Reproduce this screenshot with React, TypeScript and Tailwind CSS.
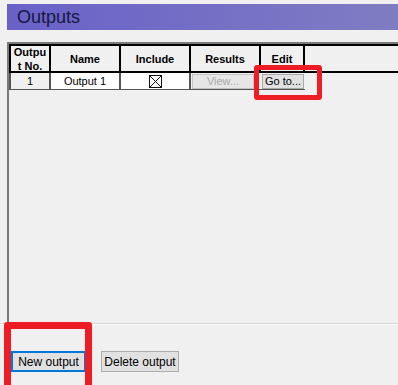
import React from 'react';

const font = { fontFamily: '"Liberation Sans", Arial, sans-serif' };

const HeaderCell = ({ w, first, children }: { w: string; first?: boolean; children: React.ReactNode }) => (
  <div
    className={`${w} ${first ? 'border-l-2' : ''} border-r-2 border-black flex items-center justify-center text-center text-[11px] font-bold leading-[14px] text-black`}
  >
    {children}
  </div>
);

const App = () => {
  return (
    <div className="relative w-[398px] h-[385px] overflow-hidden bg-[#f0f0f0]" style={font}>
      {/* title bar */}
      <div className="ml-[7px] mt-[4px] h-[26px] bg-gradient-to-r from-[#6961c8] to-[#807cc2] flex items-center pl-[10px]">
        <span className="text-[18px] leading-none text-[#17173f]">Outputs</span>
      </div>

      {/* grid area */}
      <div className="ml-[7px] mt-[12px] h-[281px] border-t-2 border-l-2 border-[#7a7a7a]">
        <div className="flex h-[29px] border-t-2 border-b-2 border-black">
          <HeaderCell w="w-[42px]" first>
            Outpu
            <br />
            t No.
          </HeaderCell>
          <HeaderCell w="w-[70px]">Name</HeaderCell>
          <HeaderCell w="w-[70px]">Include</HeaderCell>
          <HeaderCell w="w-[70px]">Results</HeaderCell>
          <HeaderCell w="w-[44px]">Edit</HeaderCell>
        </div>
        <div className="flex h-[17px] text-[11px] leading-none text-black">
          <div className="w-[42px] border-l-2 border-r-2 border-b border-[#555] flex items-center justify-center bg-[#f0f0f0]">
            1
          </div>
          <div className="w-[70px] border-r-2 border-b border-[#555] flex items-center justify-center bg-white">
            Output 1
          </div>
          <div className="w-[70px] border-r-2 border-b border-[#555] flex items-center justify-center bg-white">
            <svg width="13" height="13" viewBox="0 0 13 13">
              <rect x="0.5" y="0.5" width="12" height="12" fill="white" stroke="#111" />
              <path d="M1 1 L12 12 M12 1 L1 12" stroke="#111" strokeWidth="1" />
            </svg>
          </div>
          <div className="w-[70px] border-b border-[#555] flex items-center bg-[#f0f0f0]">
            <div className="ml-px w-[62px] h-[15px] border border-[#c4c4c4] bg-[#e6e6e6] flex items-center justify-center text-[#a8a8a8]">
              View...
            </div>
          </div>
          <div className="w-[44px] border-b border-[#555] flex items-center bg-[#f0f0f0]">
            <div className="ml-px w-[42px] h-[15px] border border-[#a8a8a8] bg-[#e1e1e1] flex items-center justify-center text-black">
              Go to...
            </div>
          </div>
        </div>
      </div>

      {/* separator */}
      <div className="h-[2px] border-t border-[#d8d8d8] bg-white/60" />

      {/* buttons */}
      <div className="flex gap-[15px] pl-[11px] pt-[26px]">
        <button className="w-[75px] h-[21px] border-2 border-[#0078d7] bg-[#e1e1e1] text-[12px] text-black leading-none">
          New output
        </button>
        <button className="w-[78px] h-[21px] border border-[#adadad] bg-[#e1e1e1] text-[12px] text-black leading-none">
          Delete output
        </button>
      </div>

      {/* red annotations */}
      <div className="absolute left-[254px] top-[65px] w-[68px] h-[35px] border-[5px] border-[#ee1c25] rounded-[3px]" />
      <div className="absolute left-[4px] top-[322px] w-[88px] h-[70px] border-[7px] border-[#ee1c25] rounded-[3px]" />
    </div>
  );
};

export default App;
